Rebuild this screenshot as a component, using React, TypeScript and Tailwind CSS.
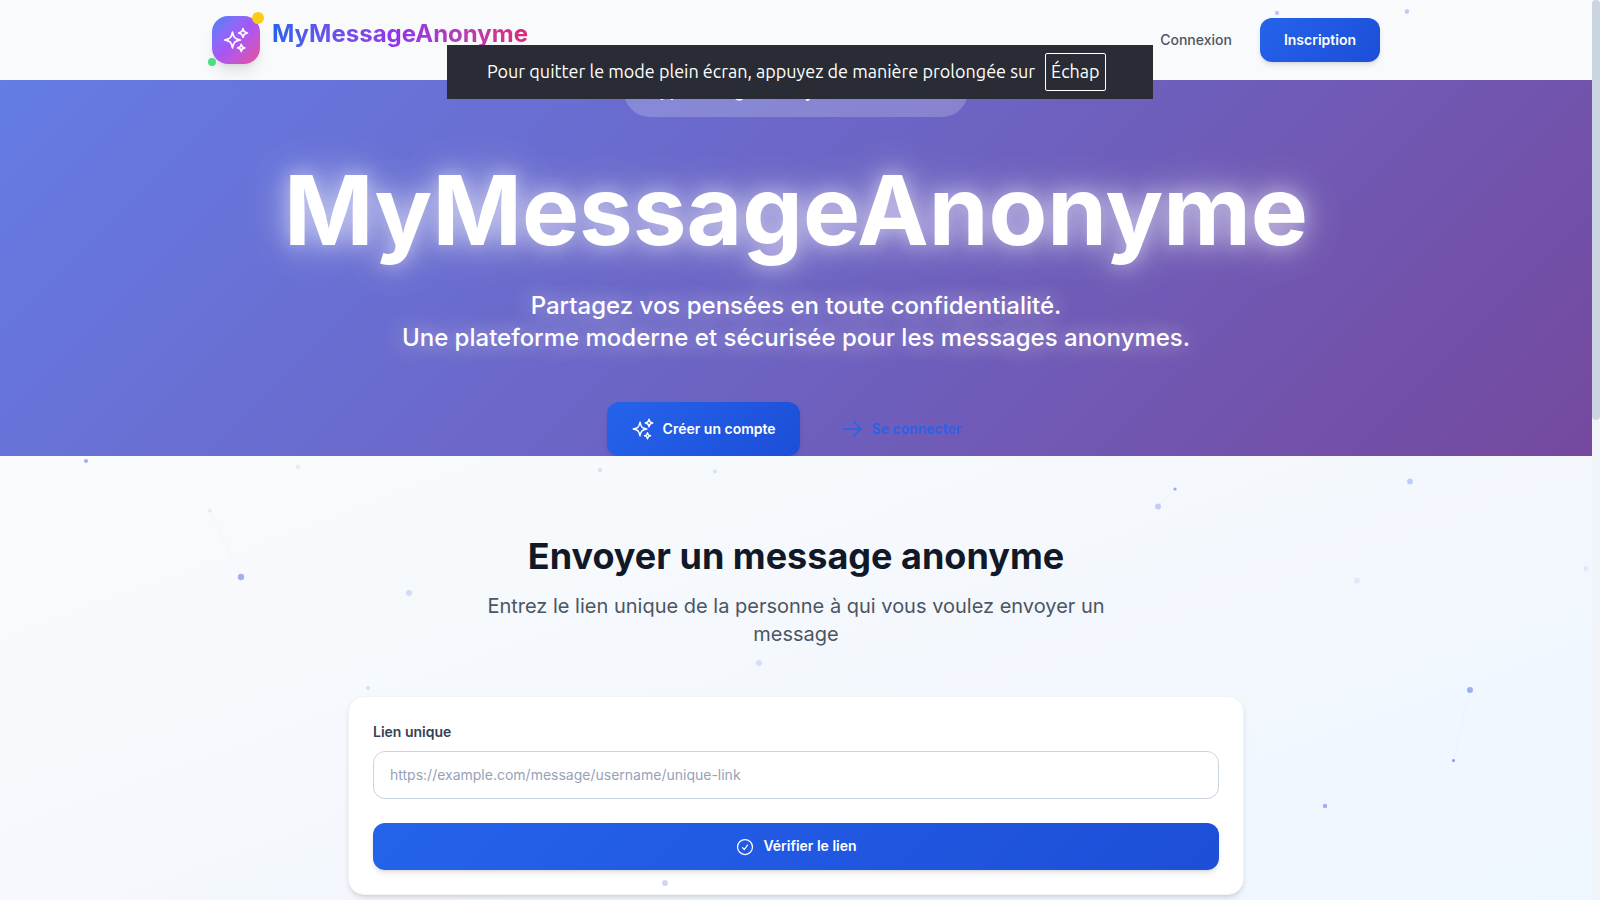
import React from 'react';
import { HiOutlineArrowRight, HiOutlineCheckCircle, HiOutlineSparkles } from 'react-icons/hi2';

const particles = [
  { x: 1277, y: 13, r: 2.2, opacity: 0.4 },
  { x: 1407, y: 11.5, r: 2.2, opacity: 0.4 },
  { x: 86, y: 461, r: 2.1, opacity: 0.6 },
  { x: 298, y: 467, r: 2.4, opacity: 0.1 },
  { x: 209.7, y: 510.5, r: 2, opacity: 0.1 },
  { x: 241, y: 577, r: 3.2, opacity: 0.6 },
  { x: 600, y: 470, r: 2.2, opacity: 0.2 },
  { x: 715, y: 471.5, r: 1.9, opacity: 0.2 },
  { x: 409, y: 593, r: 3, opacity: 0.25 },
  { x: 759, y: 663, r: 3, opacity: 0.22 },
  { x: 368, y: 688, r: 2, opacity: 0.2 },
  { x: 665, y: 883, r: 3, opacity: 0.32 },
  { x: 1158, y: 506.5, r: 3, opacity: 0.35 },
  { x: 1175, y: 489, r: 1.6, opacity: 0.65 },
  { x: 1410, y: 481.5, r: 3, opacity: 0.35 },
  { x: 1357, y: 580.6, r: 3, opacity: 0.12 },
  { x: 1586, y: 568.5, r: 2.6, opacity: 0.12 },
  { x: 1470, y: 690, r: 3, opacity: 0.6 },
  { x: 1453.5, y: 760.5, r: 1.5, opacity: 0.8 },
  { x: 1325, y: 806, r: 2.2, opacity: 0.6 },
];

const links = [
  { x1: 209.7, y1: 510.5, x2: 241, y2: 577, opacity: 0.04 },
  { x1: 209.7, y1: 510.5, x2: 298, y2: 467, opacity: 0.01 },
  { x1: 1158, y1: 506.5, x2: 1175, y2: 489, opacity: 0.06 },
  { x1: 1470, y1: 690, x2: 1453.5, y2: 760.5, opacity: 0.04 },
];

const Particles: React.FC = () => (
  <svg className="pointer-events-none absolute inset-0 z-20 h-full w-full" aria-hidden="true">
    {links.map(({ opacity, ...line }) => (
      <line key={`${line.x1}-${line.x2}`} {...line} stroke="#667eea" strokeOpacity={opacity} />
    ))}
    {particles.map((p) => (
      <circle key={`${p.x}-${p.y}`} cx={p.x} cy={p.y} r={p.r} fill="#667eea" fillOpacity={p.opacity} />
    ))}
  </svg>
);

const Header: React.FC = () => (
  <header className="relative z-10 bg-[#f9fafc]">
    <div className="mx-auto flex h-20 max-w-[1200px] items-center justify-between px-4">
      <a href="#" className="flex items-center gap-3">
        <span className="relative flex h-12 w-12 items-center justify-center rounded-2xl bg-gradient-to-br from-[#3b82f6] via-[#a855f7] to-[#ec4899] shadow-lg">
          <HiOutlineSparkles className="h-7 w-7 text-white" />
          <span className="absolute -top-1 -right-1 h-3 w-3 rounded-full bg-[#facc15]" />
          <span className="absolute -bottom-0.5 -left-1 h-2 w-2 rounded-full bg-[#4ade80]" />
        </span>
        <span className="pb-3">
          <span className="block bg-gradient-to-r from-[#2563eb] via-[#9333ea] to-[#db2777] bg-clip-text text-2xl font-bold text-transparent">
            MyMessageAnonyme
          </span>
        </span>
      </a>

      <nav className="flex items-center gap-7">
        <a href="#connexion" className="text-sm font-medium text-[#4b5563]">
          Connexion
        </a>
        <button
          type="button"
          className="h-11 rounded-xl bg-linear-135 from-[#2563eb] to-[#1d4ed8] px-6 text-sm font-semibold text-white shadow-md"
        >
          Inscription
        </button>
      </nav>
    </div>
  </header>
);

const Hero: React.FC = () => (
  <section className="flex h-[376px] flex-col items-center justify-end overflow-hidden bg-linear-135 from-[#647ce5] via-[#6c64c4] to-[#74499e] text-center text-white">
    <div className="mb-[45px] w-[344px] shrink-0 rounded-full bg-white/20 px-6 py-3 text-left text-base leading-7 font-semibold whitespace-nowrap">
      App messages anonymes sécurisés
    </div>
    <h1 className="mb-8 text-8xl leading-24 font-bold [text-shadow:0_0_20px_rgba(255,255,255,0.5),0_0_40px_rgba(255,255,255,0.4),0_0_60px_rgba(255,255,255,0.2)]">
      MyMessageAnonyme
    </h1>
    <p className="mb-12 text-2xl font-medium [text-shadow:0_0_20px_rgba(255,255,255,0.5),0_0_40px_rgba(255,255,255,0.3)]">
      Partagez vos pensées en toute confidentialité.
      <br />
      Une plateforme moderne et sécurisée pour les messages anonymes.
    </p>
    <div className="flex shrink-0 gap-4">
      <button
        type="button"
        className="flex h-[54px] items-center gap-2 rounded-xl bg-linear-135 from-[#2563eb] to-[#1d4ed8] px-6 text-sm font-semibold text-white shadow-md"
      >
        <HiOutlineSparkles className="h-6 w-6" />
        Créer un compte
      </button>
      <button
        type="button"
        className="flex h-[54px] items-center gap-2 rounded-xl px-6 text-sm font-semibold text-[#2563eb]"
      >
        <HiOutlineArrowRight className="h-6 w-6" />
        Se connecter
      </button>
    </div>
  </section>
);

const SendMessage: React.FC = () => (
  <section className="px-4 py-20">
    <div className="mx-auto max-w-4xl">
      <div className="mb-12 text-center">
        <h2 className="mb-4 text-4xl font-bold text-[#111827]">Envoyer un message anonyme</h2>
        <p className="mx-auto max-w-2xl text-xl text-[#4b5563]">
          Entrez le lien unique de la personne à qui vous voulez envoyer un message
        </p>
      </div>

      <form
        className="rounded-2xl border border-[#f3f4f6] bg-white p-6 shadow-md"
        onSubmit={(e) => e.preventDefault()}
      >
        <label htmlFor="unique-link" className="mb-2 block text-sm leading-[22px] font-semibold text-[#334155]">
          Lien unique
        </label>
        <input
          id="unique-link"
          type="text"
          placeholder="https://example.com/message/username/unique-link"
          className="mb-6 block h-12 w-full rounded-xl border border-[#cbd5e1] bg-white px-4 pb-0.5 text-sm placeholder:text-[#94a3b8]"
        />
        <button
          type="submit"
          className="flex h-[47px] w-full items-center justify-center gap-2 rounded-xl bg-linear-135 from-[#2563eb] to-[#1d4ed8] text-sm font-semibold text-white shadow-md"
        >
          <HiOutlineCheckCircle className="h-5 w-5" />
          <span className="pb-0.5">Vérifier le lien</span>
        </button>
      </form>
    </div>
  </section>
);

const FullscreenNotice: React.FC = () => (
  <div
    role="status"
    className="fixed top-[45px] left-1/2 z-30 flex h-[54px] w-[706px] -translate-x-1/2 items-center gap-2.5 bg-[#292c34] pl-10 font-['Ubuntu','Noto_Sans',sans-serif] text-lg whitespace-nowrap text-white"
  >
    <span className="pb-0.5">Pour quitter le mode plein écran, appuyez de manière prolongée sur</span>
    <kbd className="flex h-[38px] items-center rounded-xs border border-white px-[5px] pb-0.5 font-[inherit]">
      Échap
    </kbd>
  </div>
);

const App: React.FC = () => {
  return (
    <div className="relative flex h-screen bg-linear-160 from-[#fafbfc] from-30% via-[#f4f8fd] via-65% to-[#eef6ff] font-['Inter',sans-serif]">
      <Particles />
      <main className="min-w-0 flex-1 overflow-y-auto [scrollbar-width:none]">
        <Header />
        <Hero />
        <SendMessage />
      </main>

      {/* Scroll track */}
      <div className="w-2 shrink-0 bg-[#f1f5f9]" aria-hidden="true">
        <div className="h-[46.7%] rounded bg-[#cbd5e1]" />
      </div>

      <FullscreenNotice />
    </div>
  );
};

export default App;
